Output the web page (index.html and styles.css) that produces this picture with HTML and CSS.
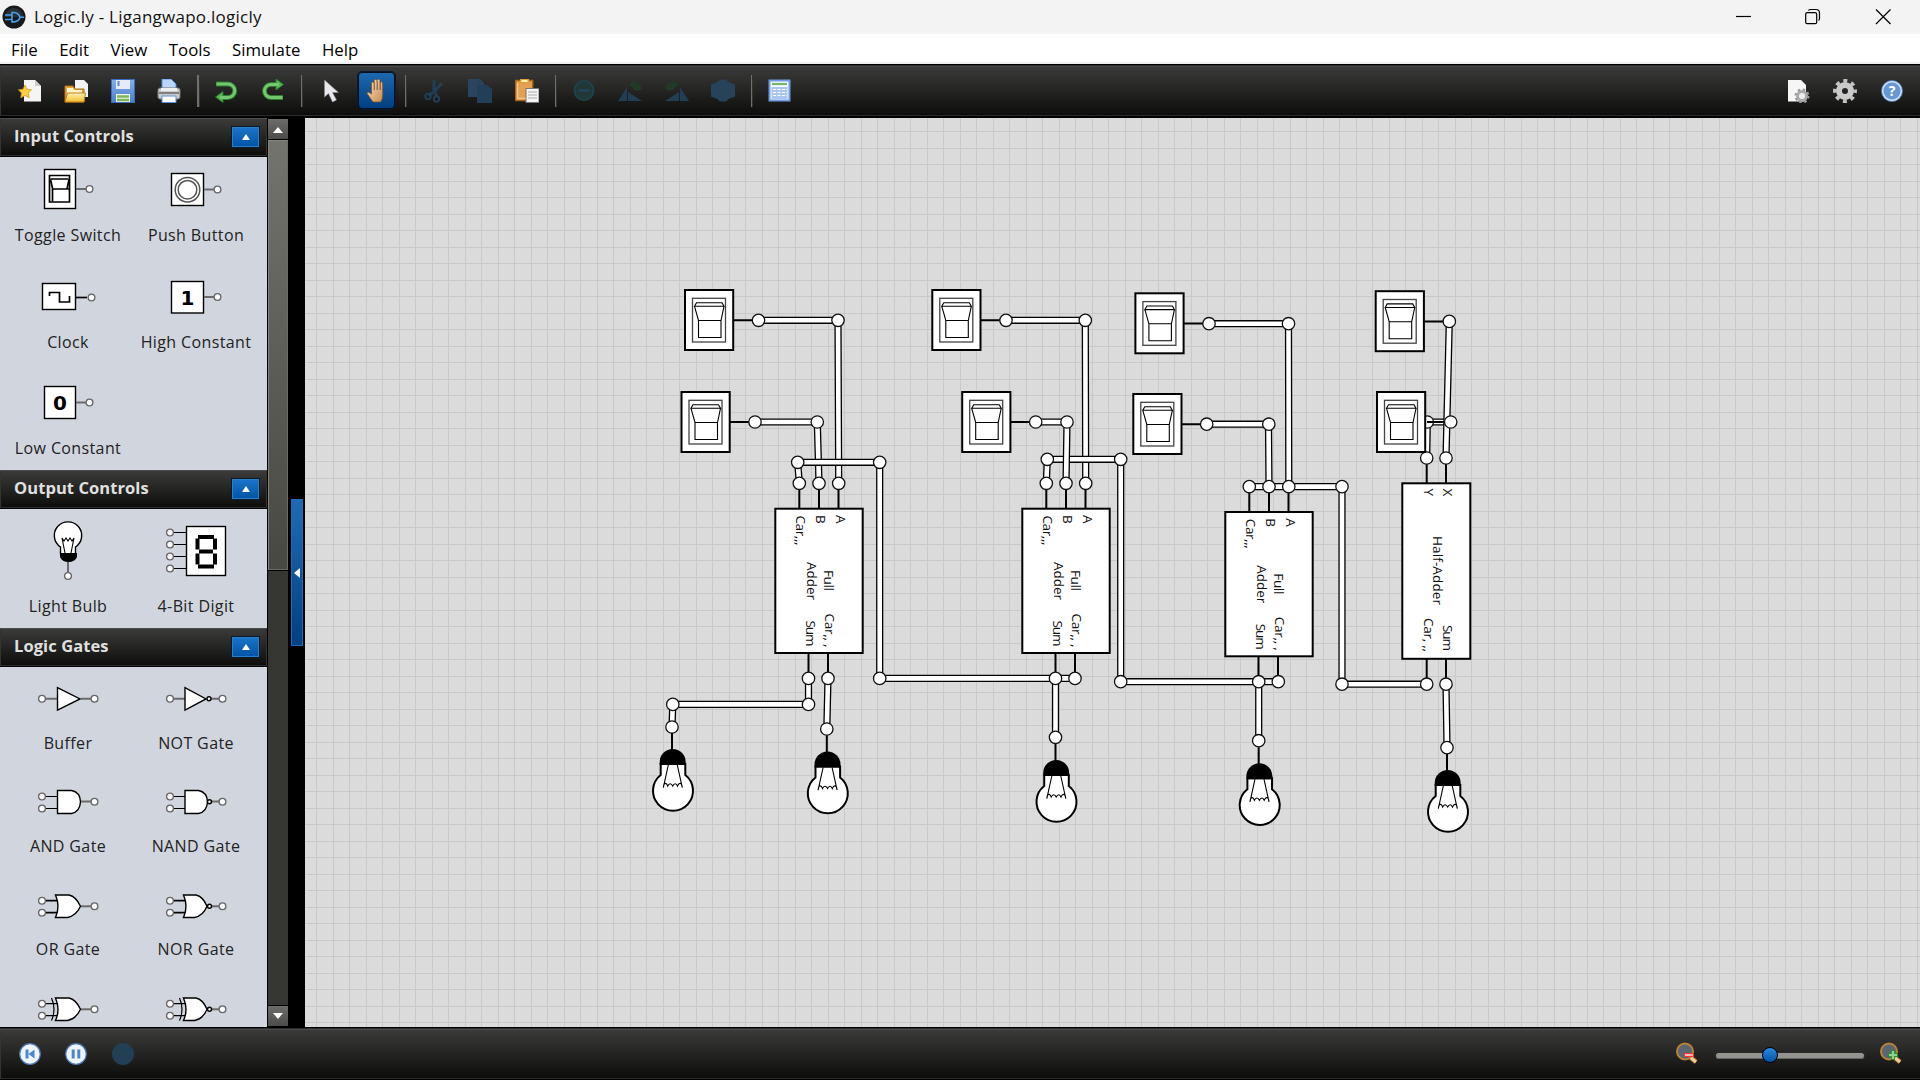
FILE: index.html
```html
<!DOCTYPE html>
<html lang="en">
<head>
<meta charset="utf-8">
<title>Logic.ly - Ligangwapo.logicly</title>
<link rel="stylesheet" href="styles.css">
</head>
<body>
<svg class="defs" width="0" height="0" aria-hidden="true">
  <defs>
    <linearGradient id="folder" x1="0" y1="0" x2="0" y2="1"><stop offset="0" stop-color="#fdf3b4"/><stop offset="1" stop-color="#f0bf2c"/></linearGradient>
    <linearGradient id="disk" x1="0" y1="0" x2="0" y2="1"><stop offset="0" stop-color="#86aee8"/><stop offset="1" stop-color="#4c7fd0"/></linearGradient>
    <linearGradient id="skin" x1="0" y1="0" x2="1" y2="1"><stop offset="0" stop-color="#fbe3c0"/><stop offset="1" stop-color="#c98a50"/></linearGradient>
    <g id="switch">
      <rect class="part" x="-24" y="-30" width="48.2" height="60"/>
      <rect class="bezel" x="-16.5" y="-21.7" width="33" height="43.7"/>
      <path class="thin" d="M-14.5-13.7l2-3.6h25.5l2 3.6zM-14.5-13.7l4 14.2h22.5l3-14.2M-10.5.5h22.5v17h-22.5z"/>
    </g>
    <g id="bulb">
      <path class="stem" d="M0 6v17"/>
      <path class="part" d="M-11.3 37v11A20 20 0 1 0 13.3 48V37z"/>
      <path d="M-12.3 38v-3a13 13 0 0 1 26 0v3z"/>
      <path class="thin" d="M-3.7 38-8.7 60.7C-8.2 55-5.5 55.5-4.3 59 C-3 56-.7 56 .7 59 C2.2 56 4.2 56 5.5 59 C7 55.5 9.8 55 10.3 60.7L5.3 38"/>
    </g>
    <g id="full-adder">
      <path class="stem" d="M799.3 488v20M819 488v20M838.5 488v20M808.5 653v20M828 653v20"/>
      <rect class="part" x="775.3" y="508.7" width="87.4" height="144.3"/>
    </g>
    <circle id="node" class="node" r="6.2"/>
    <circle id="pin" class="pin" r="3.4"/>
  </defs>
</svg>
<div class="app">
  <header class="titlebar">
    <svg class="logo" viewBox="0 0 24 24"><circle cx="12" cy="12" r="11.5" fill="#15191d"/><path d="M3 12a9 9 0 0 1 18 0z" fill="#3b4045" opacity=".6"/><path d="M3 10h7M3 14.5h7M10 7.5h2.5q4.500 1 5.500 4.700-1 3.800-5.500 4.700H10zM17 12.200h5" fill="none" stroke="#4a9fe8" stroke-width="1.600"/></svg>
    <span class="title">Logic.ly - Ligangwapo.logicly</span>
    <svg class="window-buttons" viewBox="0 0 160 34"><path d="M1 16.500h15"/><rect x="70.700" y="12.700" width="11" height="11" rx="1.500"/><path d="M73.500 10.500q.5-1 2-1h5.500q3.500 0 3.500 3.500v5.500q0 1.500-1 2M141 9.500l14.500 14.500M155.500 9.500l-14.500 14.500"/></svg>
  </header>
  <nav class="menu"><span>File</span><span>Edit</span><span>View</span><span>Tools</span><span>Simulate</span><span>Help</span></nav>
  <div class="toolbar">
    <span class="tool"><svg viewBox="0 0 24 24"><path d="M6 1h11l6 6v15.500H6z" fill="#f5f5f5"/><path d="M17 1v6h6z" fill="#ccc"/><path d="M7 6l2 4.200 4.500.6-3.200 3.200.8 4.700L7 16.500l-4.200 2.200.7-4.700L.5 10.800l4.500-.6z" fill="#fbcf42" stroke="#d79a1b" stroke-width=".8"/></svg></span>
    <span class="tool"><svg viewBox="0 0 24 24"><path d="M11 1h9l4 4v13H11z" fill="#f4f4f4"/><path d="M1 7h8l2 3h9v13H1z" fill="#e9a83a" stroke="#b96b17"/><path d="M3 9h6l1.500 2H18v3H3z" fill="#fff6c9"/><path d="M3.500 14h18l-1.500 9H1z" fill="url(#folder)" stroke="#c47a1a"/></svg></span>
    <span class="tool"><svg viewBox="0 0 24 24"><rect x=".5" y=".5" width="23" height="23" fill="url(#disk)" stroke="#3b6cc0"/><path d="M5 1h14v9H5z" fill="#e4ecf7"/><path d="M7.500 2v5" stroke="#5b86c8" stroke-width="2"/><path d="M5 15h14v8H5z" fill="#eef6e8"/><path d="M6 17.500h12M6 21h12" stroke="#7bb85a" stroke-width="2.400"/></svg></span>
    <span class="tool"><svg viewBox="0 0 24 24"><path d="M5 0h9l5 5v7H5z" fill="#b9d6fa" stroke="#4d8be0"/><rect x="1" y="9" width="22" height="11" rx="2" fill="#c9c9c9" stroke="#777"/><path d="M4 9h16v3H4z" fill="#eee"/><path d="M2 14h20" stroke="#666" stroke-width="1.500"/><path d="M5 17h14v6.500H5z" fill="#f8fbff" stroke="#5b94e0"/></svg></span>
    <i class="sep"></i>
    <span class="tool"><svg viewBox="0 0 24 24"><path d="M2 5h12a5.800 5.800 0 0 1 0 13.500H8" fill="none" stroke="#2b7c2d" stroke-width="5"/><path d="M9 12.500v11L1.500 18z" fill="#57b455" stroke="#2b7c2d"/><path d="M2.500 5H14a5.800 5.800 0 0 1 0 13.500H6" fill="none" stroke="#74c66f" stroke-width="3"/></svg></span>
    <span class="tool"><svg viewBox="0 0 24 24"><path d="M22 18.500H10A5.800 5.800 0 0 1 10 5.500h7" fill="none" stroke="#2b7c2d" stroke-width="5"/><path d="M15 0v11L22.500 5.500z" fill="#57b455" stroke="#2b7c2d"/><path d="M18 5.500h-8A5.800 5.800 0 0 0 10 18.500h11.500" fill="none" stroke="#74c66f" stroke-width="3"/></svg></span>
    <i class="sep"></i>
    <span class="tool"><svg viewBox="0 0 24 24"><path d="M6.500 1v17l4-3.500 4 8.500 4-2-4-7.500h6z" fill="#e9e9ed" stroke="#888" stroke-width=".6"/></svg></span>
    <span class="tool active"><svg viewBox="0 0 24 24"><path d="M7 23q-3-4-6.200-9 1.700-2 4.700 1V4q1.200-2 2.500 0V1.500q1.500-2 3 0V1q1.500-1.500 3 0v2.500q1.500-1.500 2.700.5v12q0 4-2 7z" fill="url(#skin)" stroke="#7a4d24" stroke-width=".7" transform="translate(1 0)"/><path d="M9.200 3v8M12.200 2v9M15.200 3v8" stroke="#7a4d24"/></svg></span>
    <i class="sep"></i>
    <span class="tool"><svg viewBox="0 0 24 24"><path d="M12 1v13M20 4l-8 9M11 14l-5 2M13 14l2 3" fill="none" stroke="#213e55" stroke-width="3"/><circle cx="6" cy="17.500" r="2.700" fill="none" stroke="#213e55" stroke-width="2"/><circle cx="14.500" cy="20" r="2.700" fill="none" stroke="#213e55" stroke-width="2"/></svg></span>
    <span class="tool"><svg viewBox="0 0 24 24"><path d="M0 0h12l4 4v14H0z" fill="#2a455b"/><path d="M9 6h10l5 4v14H9z" fill="#213f56"/></svg></span>
    <span class="tool"><svg viewBox="0 0 24 24"><rect x=".7" y="1.500" width="17" height="20" fill="#e2a050" stroke="#a7651c" stroke-width="1.500"/><path d="M2.500 4v15.500h13" fill="none" stroke="#f3c98a" stroke-width="1.500"/><path d="M5 0h9v4H5z" fill="#dba23c"/><path d="M6.500 1h6v2h-6z" fill="#fff4b0"/><rect x="11" y="9.500" width="13" height="14" fill="#f4f4f4" stroke="#777"/><path d="M13 13h9M13 16h9M13 19h9" stroke="#aaa"/></svg></span>
    <i class="sep"></i>
    <span class="tool"><svg viewBox="0 0 24 24"><circle cx="12" cy="11.500" r="9.500" fill="#20382f" stroke="#20414c" stroke-width="2"/><circle cx="12" cy="11.500" r="6" fill="none" stroke="#1e3b4a"/><path d="M7 11.500h10" stroke="#20425c" stroke-width="3"/></svg></span>
    <span class="tool"><svg viewBox="0 0 24 24"><path d="M0 22 9 8v14zM10 13v9h14z" fill="#213e54"/><path d="M11 6l4-5 1 2q6 0 8 7-4 3-8 1-2-4-5-5z" fill="#203a27"/></svg></span>
    <span class="tool"><svg viewBox="0 0 24 24"><path d="M24 22 15 8v14zM14 13v9H0z" fill="#213e54"/><path d="M13 6 9 1 8 3q-6 0-8 7 4 3 8 1 2-4 5-5z" fill="#203a27"/></svg></span>
    <span class="tool"><svg viewBox="0 0 24 24"><path d="M0 5.500 6.500 3 9 .5h6L17.500 3 24 5.500v12L17.500 20 15 22.500H9L6.500 20 0 17.500z" fill="#27435a"/></svg></span>
    <i class="sep"></i>
    <span class="tool"><svg viewBox="0 0 24 24"><rect x="1.500" y="1.500" width="20" height="20" fill="#f4f8ff" stroke="#6f9ce2" stroke-width="2"/><path d="M4 5h15" stroke="#76b763" stroke-width="2.200"/><path d="M3.500 8h16v12h-16z" fill="#a9c6ee"/><path d="M5 10.500h14M5 13.500h14M5 16.500h14" stroke="#fff" stroke-dasharray="3 1.500"/></svg></span>
    <span class="spring"></span>
    <span class="tool"><svg viewBox="0 0 24 24"><path d="M1 1h13l5 5v16.500H1z" fill="#f6f6f6"/><circle cx="15" cy="17" r="4.500" fill="#eee" stroke="#aaa" stroke-width="3"/><circle cx="15" cy="17" r="6.500" fill="none" stroke="#999" stroke-width="2" stroke-dasharray="2.500 2.600"/></svg></span>
    <span class="tool"><svg viewBox="0 0 24 24"><circle cx="12" cy="12" r="6" fill="none" stroke="#cbcbcb" stroke-width="6"/><circle cx="12" cy="12" r="10.200" fill="none" stroke="#c4c4c4" stroke-width="3.500" stroke-dasharray="4 4.010" stroke-dashoffset="2"/></svg></span>
    <span class="tool"><svg viewBox="0 0 24 24"><circle cx="12" cy="12" r="9.500" fill="#6798d2" stroke="#c9dcf3" stroke-width="2"/><circle cx="12" cy="12" r="10.600" fill="none" stroke="#4377b8" stroke-width=".8"/><text x="12" y="17" text-anchor="middle" class="help-mark">?</text></svg></span>
  </div>
  <main class="work">
    <aside class="palette">
      <h2 class="head">Input Controls<b class="fold"></b></h2>
      <div class="items inputs">
        <div class="item"><svg viewBox="-64 -22 128 44"><rect class="box" x="-23.500" y="-19.500" width="31" height="39"/><path d="M-18.500-13.500h20v26.500h-20z" class="line2"/><path d="M-17.500-10h18M1-9.500-1 0M-17.500-9.500l2 9M-16 0H1M-15.500 0v12.500" class="line2"/><path class="lead" d="M8 0h11"/><use href="#pin" x="21.500" y="0"/></svg><span>Toggle Switch</span></div>
        <div class="item"><svg viewBox="-64 -22 128 44"><rect class="box" x="-24.500" y="-15.500" width="32" height="32"/><circle cx="-8.500" cy=".7" r="12.300" class="ring"/><circle cx="-8.500" cy=".7" r="9.300" class="ring"/><path class="lead" d="M8 .5h11"/><use href="#pin" x="21.500" y=".5"/></svg><span>Push Button</span></div>
        <div class="item"><svg viewBox="-64 -25 128 44"><rect class="box" x="-25.500" y="-15.500" width="33" height="26"/><path d="M-18.500-3v-3.500h10v9.500h10v-6" class="line2"/><path class="line2" d="M8-1.500h11"/><use href="#pin" x="23.500" y="-1.500"/></svg><span>Clock</span></div>
        <div class="item"><svg viewBox="-64 -25 128 44"><rect class="box" x="-24.500" y="-17.500" width="32" height="31.500"/><text class="digit" x="-8.500" y="5.500" text-anchor="middle">1</text><path class="lead" d="M8-2h11"/><use href="#pin" x="21.500" y="-2"/></svg><span>High Constant</span></div>
        <div class="item"><svg viewBox="-64 -24 128 44"><rect class="box" x="-23.500" y="-17.500" width="31" height="32"/><text class="digit" x="-8" y="5.500" text-anchor="middle">0</text><path class="lead" d="M8-1.500h11"/><use href="#pin" x="21.500" y="-1.500"/></svg><span>Low Constant</span></div>
      </div>
      <h2 class="head">Output Controls<b class="fold"></b></h2>
      <div class="items outputs">
        <div class="item"><svg viewBox="-64 -31 128 62"><path class="box" d="M-7.500 4v-7A13.700 13.700 0 1 1 7.500-3v7z"/><path d="M-8 3H9v4q-2 5-8.500 5T-8 7z"/><path class="thin" d="M-3 3-6-12l2 3 2-3 2 3 2-3 2 3 2-3L3 3"/><path class="lead" d="M0 12v12"/><use href="#pin" x="0" y="26"/></svg><span>Light Bulb</span></div>
        <div class="item"><svg viewBox="-64 -31 128 62"><rect class="box" x="-9.500" y="-23.500" width="39" height="49"/><path class="line1" d="M-23-17.500H-10M-23-5.500H-10M-23 6.500H-10M-23 18.500H-10"/><use href="#pin" x="-26" y="-17.500"/><use href="#pin" x="-26" y="-5.500"/><use href="#pin" x="-26" y="6.500"/><use href="#pin" x="-26" y="18.500"/><g class="segments"><path d="M2-13h16M3 1.500h14M2 16.500h16"/><path d="M1.500-11.500v11M19-11.500v11M1.500 3.500v11M19 3.500v11"/></g></svg><span>4-Bit Digit</span></div>
      </div>
      <h2 class="head">Logic Gates<b class="fold"></b></h2>
      <div class="items gates">
        <div class="item"><svg viewBox="-64 -22 128 44"><path class="lead" d="M-23-.3h12M13-.3h11"/><path class="box" d="M-10.500-11.300v22.500L12-.1z"/><use href="#pin" x="-26" y="-.3"/><use href="#pin" x="26.500" y="-.3"/></svg><span>Buffer</span></div>
        <div class="item"><svg viewBox="-64 -22 128 44"><path class="lead" d="M-23-.3h12M15-.3h9"/><path class="box" d="M-11-11.300v22.500L10-.1z"/><circle class="bubble" cx="13" cy="-.3" r="2"/><use href="#pin" x="-26" y="-.3"/><use href="#pin" x="26.500" y="-.3"/></svg><span>NOT Gate</span></div>
        <div class="item"><svg viewBox="-64 -22 128 44"><path class="lead" d="M13-.5h11"/><path class="line1" d="M-23-5.500h13M-23 6.500h13"/><path class="box" d="M-10.500-11.500h14q8.500 1.500 9 11.300-.5 10-9 11.700h-14z"/><use href="#pin" x="-26" y="-5.500"/><use href="#pin" x="-26" y="6.500"/><use href="#pin" x="26.500" y="-.3"/></svg><span>AND Gate</span></div>
        <div class="item"><svg viewBox="-64 -22 128 44"><path class="lead" d="M15-.5h9"/><path class="line1" d="M-23-5.500h13M-23 6.500h13"/><path class="box" d="M-11-11.500H2.500q8.500 1.500 9 11.300-.5 10-9 11.700H-11z"/><circle class="bubble" cx="13.500" cy="-.3" r="2"/><use href="#pin" x="-26" y="-5.500"/><use href="#pin" x="-26" y="6.500"/><use href="#pin" x="26.500" y="-.3"/></svg><span>NAND Gate</span></div>
        <div class="item"><svg viewBox="-64 -22 128 44"><path class="lead" d="M13 .3h11"/><path class="line2" d="M-23-5.300h13M-23 6.700h13"/><path class="box" d="M-12.500-11H1Q8-9.500 12.500.3 8 10-.5 11.500h-12q5-11 0-22.500z"/><use href="#pin" x="-26" y="-5.300"/><use href="#pin" x="-26" y="6.700"/><use href="#pin" x="26.500" y=".3"/></svg><span>OR Gate</span></div>
        <div class="item"><svg viewBox="-64 -22 128 44"><path class="lead" d="M15 .3h9"/><path class="line2" d="M-23-5.300h13M-23 6.700h13"/><path class="box" d="M-12.500-11H0Q7-9.500 11 .3 7 10-1.500 11.500h-11q5-11 0-22.500z"/><circle class="bubble" cx="13.500" cy=".3" r="2"/><use href="#pin" x="-26" y="-5.300"/><use href="#pin" x="-26" y="6.700"/><use href="#pin" x="26.500" y=".3"/></svg><span>NOR Gate</span></div>
        <div class="item"><svg viewBox="-64 -22 128 44"><path class="lead" d="M13 .3h11"/><path class="line1" d="M-23-5.300h14M-23 6.700h14"/><path class="box" d="M-12.500-11H1Q8-9.500 12.500.3 8 10-.5 11.500h-12q5-11 0-22.500z"/><path class="line1" d="M-16.500-11q5 11 0 22.500"/><use href="#pin" x="-26" y="-5.300"/><use href="#pin" x="-26" y="6.700"/><use href="#pin" x="26.500" y=".3"/></svg></div>
        <div class="item"><svg viewBox="-64 -22 128 44"><path class="lead" d="M15 .3h9"/><path class="line1" d="M-23-5.300h14M-23 6.700h14"/><path class="box" d="M-12.500-11H0Q7-9.500 11 .3 7 10-1.500 11.500h-11q5-11 0-22.500z"/><path class="line1" d="M-16.500-11q5 11 0 22.500"/><circle class="bubble" cx="13.500" cy=".3" r="2"/><use href="#pin" x="-26" y="-5.300"/><use href="#pin" x="-26" y="6.700"/><use href="#pin" x="26.500" y=".3"/></svg></div>
      </div>
    </aside>
    <div class="scroll"><i class="arrow up"></i><i class="thumb"></i><i class="track"></i><i class="arrow down"></i></div>
    <div class="divider"><i class="handle"></i></div>
    <section class="canvas">
      <svg class="diagram" viewBox="305 118 1615 909">
        <g class="wire">
          <path d="M758.500 320.300H838L838.700 483.300"/><path class="core" d="M758.500 320.300H838L838.700 483.300"/>
          <path d="M755 422H817.300L819 483.300"/><path class="core" d="M755 422H817.300L819 483.300"/>
          <path d="M799.300 483.300 797.700 462.300H879.700V678.400H1075"/><path class="core" d="M799.300 483.300 797.700 462.300H879.700V678.400H1075"/>
          <path d="M1006 320.300H1085.300L1085.700 483.300"/><path class="core" d="M1006 320.300H1085.300L1085.700 483.300"/>
          <path d="M1046.300 483.300 1047.300 459.300H1120.700V681.700H1278.300"/><path class="core" d="M1046.300 483.300 1047.300 459.300H1120.700V681.700H1278.300"/>
          <path d="M1035.700 422H1067L1066 483.300"/><path class="core" d="M1035.700 422H1067L1066 483.300"/>
          <path d="M1209 323.700H1288.500L1288.800 486.700"/><path class="core" d="M1209 323.700H1288.500L1288.800 486.700"/>
          <path d="M1206.700 424.200H1268.500L1269 486.700"/><path class="core" d="M1206.700 424.200H1268.500L1269 486.700"/>
          <path d="M1249.300 486.600H1342V684.200H1426.700"/><path class="core" d="M1249.300 486.600H1342V684.200H1426.700"/>
          <path d="M1450.700 422H1427.300L1426.700 458"/><path class="core" d="M1450.700 422H1427.300L1426.700 458"/>
          <path d="M1449.300 321.400 1446 458"/><path class="core" d="M1449.300 321.400 1446 458"/>
          <path d="M808.500 678.400V704.400H672.800L672 727"/><path class="core" d="M808.500 678.400V704.400H672.800L672 727"/>
          <path d="M828 678.400 826.800 729"/><path class="core" d="M828 678.400 826.800 729"/>
          <path d="M1055.500 678.400V737.300"/><path class="core" d="M1055.500 678.400V737.300"/>
          <path d="M1258.700 681.700V740.700"/><path class="core" d="M1258.700 681.700V740.700"/>
          <path d="M1446 684.200 1447 747.600"/><path class="core" d="M1446 684.200 1447 747.600"/>
        </g>
        <path class="stem" d="M733 320.200h20M730 422h20M981 320.200h20M1010 422h20M1184 323.600h20M1181 424.200h20M1425 321.400h19M1427 422h19"/>
        <path class="stem" d="M1426.700 463v20M1446 463v20M1426.700 659v20M1446 659v20"/>
        <use href="#full-adder"/><use href="#full-adder" x="247"/><use href="#full-adder" x="450" y="3.300"/>
        <rect class="part" x="1402.300" y="483.300" width="68" height="175.500"/>
        <g>
          <use href="#node" x="758.500" y="320.300"/><use href="#node" x="838" y="320.300"/><use href="#node" x="755" y="422"/><use href="#node" x="817.300" y="422"/>
          <use href="#node" x="797.700" y="462.300"/><use href="#node" x="879.700" y="462.300"/><use href="#node" x="799.300" y="483.300"/><use href="#node" x="819" y="483.300"/><use href="#node" x="838.700" y="483.300"/>
          <use href="#node" x="808.500" y="678.400"/><use href="#node" x="828" y="678.400"/><use href="#node" x="879.700" y="678.400"/><use href="#node" x="808.500" y="704.400"/><use href="#node" x="672.800" y="704.400"/><use href="#node" x="672" y="727"/><use href="#node" x="826.800" y="729"/>
          <use href="#node" x="1006" y="320.300"/><use href="#node" x="1085.300" y="320.300"/><use href="#node" x="1035.700" y="422"/><use href="#node" x="1067" y="422"/><use href="#node" x="1047.300" y="459.300"/><use href="#node" x="1120.700" y="459.300"/>
          <use href="#node" x="1046.300" y="483.300"/><use href="#node" x="1066" y="483.300"/><use href="#node" x="1085.700" y="483.300"/><use href="#node" x="1055.500" y="678.400"/><use href="#node" x="1075" y="678.400"/><use href="#node" x="1055.500" y="737.300"/>
          <use href="#node" x="1209" y="323.700"/><use href="#node" x="1288.500" y="323.700"/><use href="#node" x="1206.700" y="424.200"/><use href="#node" x="1268.800" y="424.200"/><use href="#node" x="1249.300" y="486.600"/><use href="#node" x="1269" y="486.600"/><use href="#node" x="1288.800" y="486.600"/><use href="#node" x="1342" y="486.600"/>
          <use href="#node" x="1120.700" y="681.700"/><use href="#node" x="1258.700" y="681.700"/><use href="#node" x="1278.300" y="681.700"/><use href="#node" x="1258.700" y="740.700"/><use href="#node" x="1342" y="684.200"/>
          <use href="#node" x="1449.300" y="321.400"/><use href="#node" x="1450.700" y="422"/><use href="#node" x="1427.300" y="422"/><use href="#node" x="1426.700" y="458"/><use href="#node" x="1446" y="458"/><use href="#node" x="1426.700" y="684.200"/><use href="#node" x="1446" y="684.200"/><use href="#node" x="1447" y="747.600"/>
        </g>
        <path class="stem" d="M1427 422h17"/>
        <g>
          <use href="#switch" x="709" y="320"/><use href="#switch" x="705.500" y="422"/><use href="#switch" x="956.300" y="320"/><use href="#switch" x="986.200" y="422"/>
          <use href="#switch" x="1159.400" y="323.300"/><use href="#switch" x="1157.300" y="424"/><use href="#switch" x="1399.700" y="321.200"/><use href="#switch" x="1401" y="422"/>
        </g>
        <g>
          <use href="#bulb" x="672" y="727"/><use href="#bulb" x="826.800" y="729.500"/><use href="#bulb" x="1055.500" y="738"/><use href="#bulb" x="1258.700" y="741.200"/><use href="#bulb" x="1447" y="748"/>
        </g>
        <g class="chip-text">
          <text transform="translate(835.700 515) rotate(90)" textLength="9">A</text><text transform="translate(816 515) rotate(90)" textLength="8">B</text><text transform="translate(796 515.500) rotate(90)" textLength="30">Car,,,</text>
          <text transform="translate(823.700 570) rotate(90)" textLength="21">Full</text><text transform="translate(806.700 562) rotate(90)" textLength="38">Adder</text>
          <text transform="translate(825 613.500) rotate(90)" textLength="34">Car,, ,</text><text transform="translate(805.700 620.500) rotate(90)" textLength="26">Sum</text>
        </g>
        <g class="chip-text" transform="translate(247 0)">
          <text transform="translate(835.700 515) rotate(90)" textLength="9">A</text><text transform="translate(816 515) rotate(90)" textLength="8">B</text><text transform="translate(796 515.500) rotate(90)" textLength="30">Car,,,</text>
          <text transform="translate(823.700 570) rotate(90)" textLength="21">Full</text><text transform="translate(806.700 562) rotate(90)" textLength="38">Adder</text>
          <text transform="translate(825 613.500) rotate(90)" textLength="34">Car,, ,</text><text transform="translate(805.700 620.500) rotate(90)" textLength="26">Sum</text>
        </g>
        <g class="chip-text" transform="translate(450 3.300)">
          <text transform="translate(835.700 515) rotate(90)" textLength="9">A</text><text transform="translate(816 515) rotate(90)" textLength="8">B</text><text transform="translate(796 515.500) rotate(90)" textLength="30">Car,,,</text>
          <text transform="translate(823.700 570) rotate(90)" textLength="21">Full</text><text transform="translate(806.700 562) rotate(90)" textLength="38">Adder</text>
          <text transform="translate(825 613.500) rotate(90)" textLength="34">Car,, ,</text><text transform="translate(805.700 620.500) rotate(90)" textLength="26">Sum</text>
        </g>
        <g class="chip-text">
          <text transform="translate(1443 488.500) rotate(90)" textLength="9">X</text><text transform="translate(1423.700 488.500) rotate(90)" textLength="8">Y</text>
          <text transform="translate(1433 536) rotate(90)" textLength="69">Half-Adder</text>
          <text transform="translate(1443.300 625) rotate(90)" textLength="26">Sum</text><text transform="translate(1424 618) rotate(90)" textLength="34">Car, ,,</text>
        </g>
      </svg>
    </section>
  </main>
  <footer class="toolbar status">
    <span class="tool"><svg viewBox="0 0 24 24"><circle cx="12" cy="12" r="10.300" fill="#eef4fc" stroke="#4b76b5" stroke-width="1.200"/><path d="M7.500 7.500h3v9h-3zM16.500 7.500v9L10.500 12z" fill="#4d86d0"/></svg></span>
    <span class="tool"><svg viewBox="0 0 24 24"><circle cx="12" cy="12" r="10.300" fill="#eef4fc" stroke="#4b76b5" stroke-width="1.200"/><path d="M7.700 7.500h3v9h-3zM13.300 7.500h3v9h-3z" fill="#4d86d0"/></svg></span>
    <span class="tool"><svg viewBox="0 0 24 24"><circle cx="12" cy="12" r="11" fill="#233f55"/></svg></span>
    <span class="spring"></span>
    <div class="zoom">
      <svg viewBox="0 0 24 24"><path d="M15 15l6 5" stroke="#8d5c2c" stroke-width="5"/><path d="M15 15l6 5" stroke="#f2cf96" stroke-width="3"/><circle cx="10" cy="9.500" r="8" fill="#5a6670" stroke="#b98238" stroke-width="2"/><path d="M9 13h10" stroke="#f33" stroke-width="4"/><path d="M10 13h8" stroke="#ffb8b8" stroke-width="2"/></svg>
      <div class="slider"><i class="knob"></i></div>
      <svg viewBox="0 0 24 24"><path d="M15 15l6 5" stroke="#8d5c2c" stroke-width="5"/><path d="M15 15l6 5" stroke="#f2cf96" stroke-width="3"/><circle cx="10" cy="9.500" r="8" fill="#5a6670" stroke="#b98238" stroke-width="2"/><path d="M9 13h10M14 8v10" stroke="#2e8a31" stroke-width="4"/><path d="M10 13h8M14 9v8" stroke="#8fd48a" stroke-width="2.200"/></svg>
    </div>
  </footer>
</div>
</body>
</html>
```
FILE: styles.css
```css
* { box-sizing: border-box; }
body { margin: 0; overflow: hidden; background: #000; font-family: "Open Sans", "Noto Sans", sans-serif; }
.defs { position: absolute; }
.app { display: flex; flex-direction: column; width: 1920px; height: 1080px; }

.titlebar { display: flex; align-items: center; height: 34px; background: #f3f3f3; color: #111; }
.logo { width: 24px; height: 24px; margin-left: 2px; }
.title { margin-left: 8px; padding-bottom: 1px; font-size: 17px; line-height: 24px; letter-spacing: 0.25px; white-space: nowrap; }
.window-buttons { width: 160px; height: 34px; margin-left: auto; margin-right: 25px; fill: none; stroke: #000; stroke-width: 1.2; }

.menu { display: flex; gap: 21.6px; align-items: center; height: 30px; padding: 3px 0 0 11px; background: #fff; border-bottom: 2px solid #f0f0f0; font-size: 16.8px; line-height: 24px; color: #000; }

.toolbar { display: flex; align-items: center; gap: 9.46px; height: 54px; padding: 0 10px 0 11.4px; background: linear-gradient(#3c3c3c, #242422 50%, #0c0c0a); border: solid #000; border-width: 1px 0 2px; box-shadow: inset 0 1px #2b2b2b, inset 0 2px #4a4a4a, inset 1px 0 #333, inset 0 -1px #2c2c2c; }
.tool { display: flex; flex: none; align-items: center; justify-content: center; width: 37px; height: 37px; }
.tool svg { flex: none; width: 24px; height: 24px; }
.tool.active { border: 1px solid #07101c; border-radius: 4px; background: linear-gradient(#1d68ae, #003f84); box-shadow: 0 0 0 1px #0a1a2c; }
.sep { flex: none; width: 1.3px; height: 32px; background: #6f6f6b; box-shadow: 1px 0 #333; }
.spring { flex: 1; }
.help-mark { font: bold 14px "Open Sans", sans-serif; fill: #fff; }

.work { display: flex; height: 909px; }
.palette { width: 267px; height: 909px; overflow: hidden; background: #d1d6de; }
.head { display: flex; align-items: center; justify-content: space-between; height: 39px; margin: 0; padding: 0 7px 3px 14px; background: linear-gradient(#3c3c3c, #242422 50%, #0c0c0a); border: solid #000; border-width: 0 0 1px; box-shadow: inset 0 1px #4c4c4c, inset 1px 0 #333, inset -1px 0 #333, inset 0 -1px #2c2c2c; color: #e0e0e0; font-size: 16.5px; font-weight: 700; letter-spacing: 0.08px; }
.fold { display: flex; align-items: center; justify-content: center; width: 29px; height: 22px; margin-top: 3px; background: linear-gradient(#1c75c8, #0054a6); border: 1px solid #0a1a2a; box-shadow: inset 0 0 0 1px #2b7fc9; }
.fold::before { content: ""; border: 4px solid transparent; border-top: 0; border-bottom: 6px solid #fff; }
.items { display: grid; grid-template-columns: 128px 128px; padding-left: 4px; }
.item { display: flex; flex-direction: column; align-items: center; padding-top: 10px; font-size: 16px; line-height: 24px; letter-spacing: 0.38px; color: #222; white-space: nowrap; }
.item svg { width: 128px; height: 44px; flex: none; letter-spacing: 0; }
.inputs { height: 313px; grid-auto-rows: 106.5px; }
.inputs span { margin-top: 12px; }
.outputs { height: 119px; }
.outputs svg { height: 62px; }
.outputs span { margin-top: 13px; }
.gates { grid-auto-rows: 103.4px; }
.gates span { margin-top: 9.5px; }

.box { fill: #fff; stroke: #000; stroke-width: 1.4; }
.lead { fill: none; stroke: #6b6b6b; stroke-width: 2; }
.line1 { fill: none; stroke: #000; stroke-width: 1.2; }
.line2 { fill: none; stroke: #000; stroke-width: 1.7; }
.ring { fill: none; stroke: #555; stroke-width: 1.5; }
.bubble { fill: #fff; stroke: #000; stroke-width: 1.4; }
.pin { fill: #fff; stroke: #666; stroke-width: 1.3; }
.digit { font: bold 20px "DejaVu Sans", sans-serif; }
.segments { stroke: #000; stroke-width: 4; fill: none; }

.scroll { display: flex; flex-direction: column; width: 22px; border-left: 1px solid #000; border-right: 1px solid #000; background: #363632; }
.arrow { display: flex; align-items: center; justify-content: center; height: 22px; background: linear-gradient(#6c6c6a, #4c4c4a); border: solid #000; border-width: 1px 0; }
.arrow::before { content: ""; border: 5px solid transparent; }
.up { padding-top: 2px; }
.up::before { border-top: 0; border-bottom: 6px solid #fff; }
.down::before { border-bottom: 0; border-top: 6px solid #fff; }
.thumb { height: 431px; background: linear-gradient(#74746f, #484843); border-bottom: 1px solid #000; box-shadow: inset 1px 1px #83837e, inset -1px -1px #6a6a66; }
.track { flex: 1; }
.divider { display: flex; width: 16px; padding: 381px 2px 0; background: #000; }
.handle { display: flex; align-items: center; justify-content: center; width: 12px; height: 147px; background: linear-gradient(#1f6cb4, #003f84); box-shadow: inset 0 0 0 1px #1d6cb8; }
.handle::before { content: ""; border: 5px solid transparent; border-left: 0; border-right: 6px solid #fff; }

.canvas { flex: 1; background-color: #dbdbdb; background-image: linear-gradient(90deg, transparent 11px, #c9c9c9 11px 12px, transparent 12px 28px, #c9c9c9 28px 29px, transparent 29px), linear-gradient(transparent 13px, #c9c9c9 13px 14px, transparent 14px 30px, #c9c9c9 30px 31px, transparent 31px); background-size: 33px 33px; }
.diagram { display: block; width: 1615px; height: 909px; }
.part { fill: #fff; stroke: #000; stroke-width: 2; }
.bezel { fill: #fff; stroke: #444; stroke-width: 1.3; }
.thin { fill: none; stroke: #000; stroke-width: 1.1; }
.stem { fill: none; stroke: #000; stroke-width: 2; }
.wire path { fill: none; stroke: #000; stroke-width: 7.2; }
.wire .core { stroke: #fff; stroke-width: 4.6; }
.node { fill: #fff; stroke: #111; stroke-width: 1.3; }
.chip-text { font-size: 13.5px; fill: #111; }

.status { height: 53px; border-width: 1px 0 1px; padding-right: 17.5px; }
.zoom { display: flex; align-items: center; }
.zoom svg { width: 24px; height: 24px; }
.slider { width: 150px; height: 7px; margin: 3px 14px 0 16px; border-radius: 4px; background: #94948f; border: 1px solid #2a2a2a; border-bottom-color: #666; }
.knob { display: block; width: 16px; height: 16px; margin: -6px 0 0 46px; border-radius: 50%; border: 1px solid #001; background: linear-gradient(#2b8ae0, #0054a4); }
```
